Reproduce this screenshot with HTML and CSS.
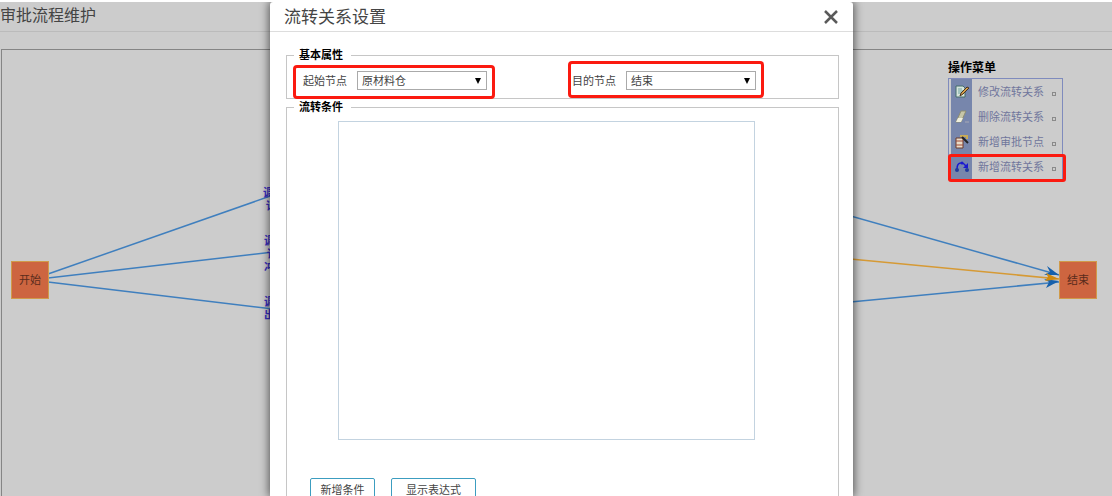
FILE: index.html
```
<!DOCTYPE html>
<html lang="zh-CN">
<head>
  <meta charset="UTF-8" />
  <meta name="viewport" content="width=device-width, initial-scale=1.0"/>
  <title>审批流程维护</title>
  <link rel="stylesheet" href="styles.css">
</head>
<body>
  <div class="page">
    <header class="page-header">
      <h1>审批流程维护</h1>
    </header>

    <div class="canvas">
      <!-- lines from the start node -->
      <svg class="edges edges-start" width="280" height="300" viewBox="0 0 280 300">
        <g fill="none" stroke="#3f7fbe" stroke-width="1.5">
          <path d="M46 224 L280 142"/>
          <path d="M46 228 L280 201"/>
          <path d="M46 232 L280 260"/>
        </g>
      </svg>
      <!-- lines into the end node -->
      <svg class="edges edges-end" width="220" height="300" viewBox="0 0 220 300">
        <g fill="none" stroke-width="1.5">
          <path stroke="#3f7fbe" d="M0 163 L219 225"/>
          <path stroke="#d69a35" d="M0 208 L219 229"/>
          <path stroke="#3f7fbe" d="M0 253 L219 232"/>
        </g>
        <path fill="#1560ac" d="M219 225 L204 225 L210 222 L207 216 Z"/>
        <path fill="#1560ac" d="M219 231 L206 238 L209 232 L204 229 Z"/>
        <path fill="#d08a10" d="M219 229 L205 231 L208 227 L206 223 Z"/>
      </svg>

      <div class="edge-label label-1">调<br>&nbsp;订</div>
      <div class="edge-label label-2">调<br>&nbsp;订<br>冲</div>
      <div class="edge-label label-3">调<br>出</div>

      <div class="node node-start">开始</div>
      <div class="node node-end">结束</div>

      <nav class="menu">
        <h2>操作菜单</h2>
        <div class="menu-list">
          <button type="button" class="menu-item">
            <span class="menu-icon">
              <svg width="14" height="14" viewBox="0 0 14 14">
                <path d="M1 1h7l2 2v9H1z" fill="#d5e4dc" stroke="#456d6b"/>
                <path d="M3 4h4M3 6h5M3 8h3" stroke="#6fa3a0"/>
                <path d="M5 11l1-3 6-6 2 1-6 6z" fill="#d6a04a" stroke="#4a3320"/>
              </svg>
            </span>
            <span class="menu-text">修改流转关系</span><i class="mark"></i>
          </button>
          <button type="button" class="menu-item">
            <span class="menu-icon">
              <svg width="14" height="14" viewBox="0 0 14 14">
                <path d="M6 1h5L6 12H1z" fill="#c6c6a8" stroke="#8d8d72"/>
                <path d="M3 8h5l-2 4H1z" fill="#eeeedd"/>
                <path d="M10 12h4" stroke="#a9a9b5"/>
              </svg>
            </span>
            <span class="menu-text">删除流转关系</span><i class="mark"></i>
          </button>
          <button type="button" class="menu-item">
            <span class="menu-icon">
              <svg width="14" height="14" viewBox="0 0 14 14">
                <path d="M1 3h7v10H1z" fill="#eadcc8" stroke="#6b3a2c"/>
                <path d="M1 6h7M1 10h7" stroke="#a04a38"/>
                <path d="M5 1h8M11 3h2" stroke="#c9ab55" stroke-width="2"/>
                <path d="M7 2l6 6" stroke="#222" stroke-width="2"/>
              </svg>
            </span>
            <span class="menu-text">新增审批节点</span><i class="mark"></i>
          </button>
          <button type="button" class="menu-item marked">
            <span class="menu-icon">
              <svg width="14" height="14" viewBox="0 0 14 14">
                <path d="M2 9C2 5 4 3 6 3s4 1 5 4" fill="none" stroke="#1a1ad0" stroke-width="1.5"/>
                <circle cx="2" cy="10" r="2" fill="#223b9c"/>
                <circle cx="12" cy="10" r="2" fill="#223b9c"/>
                <circle cx="7" cy="3" r="1.5" fill="#1a1ad0"/>
                <path d="M8 8h5v-5z" fill="#1a1ad0"/>
              </svg>
            </span>
            <span class="menu-text">新增流转关系</span><i class="mark"></i>
          </button>
        </div>
      </nav>
    </div>
  </div>

  <div class="modal" role="dialog" aria-labelledby="modal-title">
    <div class="modal-header">
      <h2 id="modal-title">流转关系设置</h2>
      <button type="button" class="close" aria-label="关闭">
        <svg width="14" height="14" viewBox="0 0 14 14">
          <path d="M1 1l12 12M13 1L1 13" stroke="#5a5a5a" stroke-width="2.5"/>
        </svg>
      </button>
    </div>

    <form class="modal-body">
      <fieldset class="basic">
        <legend>基本属性</legend>
        <div class="fields">
          <div class="field field-from">
            <label for="from-node">起始节点</label>
            <select id="from-node">
              <option>原材料仓</option>
              <option>结束</option>
            </select>
          </div>
          <div class="field field-to">
            <label for="to-node">目的节点</label>
            <select id="to-node">
              <option>结束</option>
              <option>原材料仓</option>
            </select>
          </div>
        </div>
      </fieldset>

      <fieldset class="conditions">
        <legend>流转条件</legend>
        <div class="condition-box"></div>
        <div class="actions">
          <button type="button" class="btn">新增条件</button>
          <button type="button" class="btn btn-wide">显示表达式</button>
        </div>
      </fieldset>
    </form>
  </div>
</body>
</html>
```

FILE: styles.css
```
*, *::after { box-sizing: border-box; }

body {
  margin: 0;
  font-family: "Noto Sans", "Noto Sans CJK SC", sans-serif;
  font-size: 11px;
  color: #444;
  background-color: #ccc;
  border-top: 2px solid #fff;
  height: 100vh;
  overflow: hidden;
  position: relative;
}

h1, h2 {
  margin: 0;
  font-weight: normal;
}

button, select {
  font-family: inherit;
  font-size: 11px;
}

.page {
  height: 100%;
  display: flex;
  flex-direction: column;
}

.page-header {
  height: 30px;
  border-bottom: 1px solid #bbb;
}

.page-header h1 {
  font-size: 16px;
  line-height: 27px;
}

/* flow chart */
.canvas {
  flex: 1;
  position: relative;
  margin: 17px 0 0 1px;
  border-top: 1px solid #858585;
  border-left: 1px solid #858585;
}

.edges {
  position: absolute;
  top: 0;
}

.edges-start { left: 0; }
.edges-end { right: 52px; }

.edge-label {
  position: absolute;
  color: #3a2fc0;
  font-weight: bold;
  line-height: 13px;
}

.label-1 { left: 261px; top: 136px; }
.label-2 { left: 262px; top: 184px; }
.label-3 { left: 262px; top: 245px; }

.node {
  position: absolute;
  top: 211px;
  width: 38px;
  height: 38px;
  border: 1px solid #d09a4a;
  background-color: #cd6540;
  color: #5a2c1c;
  font-family: "Liberation Serif", "Noto Sans CJK SC", serif;
  line-height: 36px;
  text-align: center;
}

.node-start { left: 9px; }
.node-end { right: 15px; }

.menu {
  position: absolute;
  top: 7px;
  right: 49px;
  width: 115px;
}

.menu h2 {
  color: #000;
  font-size: 12px;
  font-weight: bold;
  line-height: 21px;
}

.menu-list {
  border: 1px solid #7f8bbd;
  padding-left: 2px;
  background: linear-gradient(to right, #ccc 2px, #7786ac 2px, #7786ac 23px, #ccc 23px);
}

.menu-item {
  display: flex;
  align-items: center;
  width: 100%;
  height: 25px;
  padding: 0;
  border: none;
  background: none;
  color: #70769c;
  position: relative;
}

.menu-icon {
  width: 21px;
  height: 14px;
  margin-right: 6px;
  padding-left: 4px;
}

.menu-icon svg { display: block; }

.menu-text { line-height: 18px; }

.mark {
  width: 4px;
  height: 4px;
  margin: 4px 0 0 8px;
  border: 1px solid #8a8a8a;
}

/* frame over the last item */
.marked::after {
  content: "";
  position: absolute;
  top: 0;
  left: -3px;
  right: -4px;
  height: 28px;
  border: 3px solid #fb1a10;
  border-radius: 3px;
}

/* dialog */
.modal {
  position: absolute;
  top: 0;
  bottom: 0;
  left: 270px;
  right: 259px;
  overflow: hidden;
  background-color: #fff;
  border-radius: 3px 3px 0 0;
  box-shadow: 0 0 10px 1px rgba(0, 0, 0, 0.6);
}

.modal-header {
  display: flex;
  justify-content: space-between;
  align-items: center;
  height: 30px;
  padding: 0 15px 0 14px;
  border-bottom: 1px solid #ddd;
}

.modal-header h2 {
  font-size: 17px;
  line-height: 27px;
}

.close {
  padding: 0;
  border: none;
  background: none;
  cursor: pointer;
}

.close svg { display: block; }

.modal-body { padding: 15px 14px 0 16px; }

fieldset {
  margin: 0;
  padding: 0;
  border: 1px solid #c6c6c6;
}

legend {
  margin-left: 7px;
  padding: 0 8px 0 5px;
  color: #000;
  font-weight: bold;
  line-height: 16px;
}

.fields {
  display: grid;
  grid-template-columns: 1fr 1fr;
  gap: 5px;
  align-items: baseline;
  margin: -2px 0 -1px 6px;
}

.field {
  display: flex;
  align-items: center;
  justify-content: space-between;
  border: 3px solid #fb1a10;
  border-radius: 4px;
}

.field-from {
  width: 202px;
  padding: 3px 5px 6px 7px;
}

.field-to {
  width: 196px;
  padding: 7px 5px 5px 1px;
}

.field label { line-height: 19px; }

.field select {
  width: 130px;
  height: 19px;
  padding: 0 4px;
  border: 1px solid #aaa;
  border-radius: 0;
  color: #444;
  appearance: none;
  background: #fff url("data:image/svg+xml,%3Csvg xmlns='http://www.w3.org/2000/svg' width='6' height='6'%3E%3Cpath d='M0 0h6L3 6z'/%3E%3C/svg%3E") no-repeat right 5px center;
}

.conditions {
  height: 460px;
}

.condition-box {
  height: 319px;
  margin: 6px 83px 0 51px;
  border: 1px solid #c3d3e0;
}

.actions {
  display: flex;
  gap: 16px;
  margin: 38px 0 0 23px;
}

.btn {
  width: 65px;
  height: 24px;
  padding: 0;
  border: 1px solid #3c9dc0;
  border-radius: 2px;
  background-color: #fff;
  color: #444;
  line-height: 20px;
}

.btn-wide { width: 85px; }
```
